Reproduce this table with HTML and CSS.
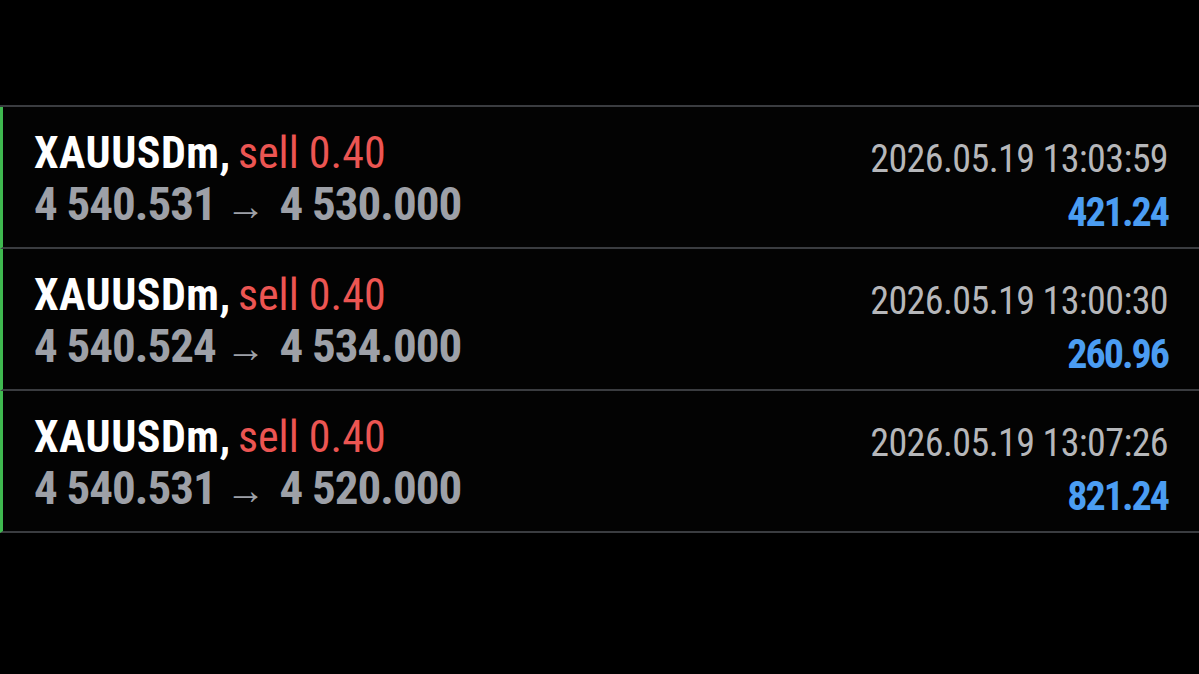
FILE: index.html
```html
<!DOCTYPE html>
<html lang="en">
<head>
    <meta charset="UTF-8">
    <title>History</title>
    <link rel="stylesheet" href="styles.css">
</head>
<body>
    <div class="list">
        <div class="deal">
            <div class="left">
                <div class="title"><span class="symbol">XAUUSDm,</span> <span class="sell">sell 0.40</span></div>
                <div class="prices">4 540.531 <span class="arrow">&rarr;</span> 4 530.000</div>
            </div>
            <div class="right">
                <div class="time">2026.05.19 13:03:59</div>
                <div class="profit">421.24</div>
            </div>
        </div>
        <div class="deal">
            <div class="left">
                <div class="title"><span class="symbol">XAUUSDm,</span> <span class="sell">sell 0.40</span></div>
                <div class="prices">4 540.524 <span class="arrow">&rarr;</span> 4 534.000</div>
            </div>
            <div class="right">
                <div class="time">2026.05.19 13:00:30</div>
                <div class="profit">260.96</div>
            </div>
        </div>
        <div class="deal">
            <div class="left">
                <div class="title"><span class="symbol">XAUUSDm,</span> <span class="sell">sell 0.40</span></div>
                <div class="prices">4 540.531 <span class="arrow">&rarr;</span> 4 520.000</div>
            </div>
            <div class="right">
                <div class="time">2026.05.19 13:07:26</div>
                <div class="profit">821.24</div>
            </div>
        </div>
    </div>
</body>
</html>
```
FILE: styles.css
```css
body {
    margin: 0;
    background-color: #000;
    font-family: 'Roboto', 'Liberation Sans', sans-serif;
    font-stretch: condensed;
    height: 674px;
    overflow: hidden;
}
.list {
    margin-top: 105px;
    border-top: 2px solid #3a3c40;
}
.deal {
    display: flex;
    justify-content: space-between;
    height: 140px;
    padding: 0 31px 0 31px;
    border-left: 3px solid #3fb950;
    border-bottom: 2px solid #3a3c40;
    background-color: #030303;
}
.left {
    padding-top: 21px;
}
.right {
    padding-top: 27px;
    text-align: right;
}
.title {
    font-size: 44px;
    word-spacing: -3px;
    line-height: 50px;
}
.symbol {
    color: #fff;
    font-weight: bold;
    letter-spacing: 0.5px;
}
.sell {
    color: #ec5552;
    word-spacing: 0;
}
.prices {
    font-size: 47px;
    line-height: 51px;
    letter-spacing: -1px;
    font-weight: bold;
    color: #9da0a7;
}
.arrow {
    margin-right: 4px;
    font-weight: normal;
    font-size: 40px;
    letter-spacing: 0;
}
.time {
    font-size: 38px;
    line-height: 50px;
    letter-spacing: -0.6px;
    color: #b6b7ba;
}
.profit {
    margin-top: 4px;
    font-size: 40px;
    line-height: 50px;
    letter-spacing: -2px;
    font-weight: bold;
    color: #4b9df2;
}
```
